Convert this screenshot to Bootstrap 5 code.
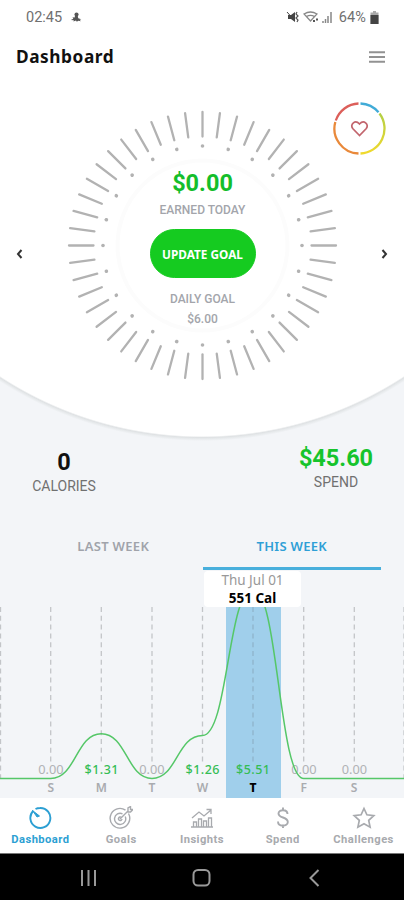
<!DOCTYPE html>
<html lang="en">
<head>
<meta charset="utf-8">
<meta name="viewport" content="width=device-width, initial-scale=1">
<title>Dashboard</title>
<link href="https://cdn.jsdelivr.net/npm/bootstrap@5.3.0/dist/css/bootstrap.min.css" rel="stylesheet">
<style>
body{font-family:"Noto Sans",sans-serif;background:#f3f5f8;color:#111;overflow:hidden}
.phone{width:404px;height:900px;overflow:hidden}
.roboto{font-family:Roboto,sans-serif}
.hero{height:441px;background:radial-gradient(circle 376px at 50% 67px,#fff 369px,#dfe2e4 370.5px,#e8ebed 372px,#f3f5f8 374px)}
.status{height:35px;padding:0 25px 0 26px;font-size:14.5px;color:#707070}
.pct{letter-spacing:.1px}
.topbar{height:43px;padding:0 19px 0 16px}
.topbar h1{font-size:17.3px;font-weight:700;letter-spacing:.55px;line-height:24px}
.stage{height:335px;padding:31px 0 0 1px}
.side{width:66px;height:289px;padding:0 16px 0 15px}
.dial>*{grid-area:1/1}
.dial{width:272px;height:272px}
.readout{padding-top:57px}
.earned{font-size:23.5px;font-weight:700;line-height:34px;color:#14be2b}
.cap{font-size:12px;line-height:20px;font-weight:500;color:#a3a5ab}
.btn-goal{--bs-btn-bg:#15cb20;--bs-btn-color:#fff;--bs-btn-border-color:#15cb20;width:106px;height:49px;border-radius:25px;font:700 11.8px "Noto Sans",sans-serif;padding:0;margin:9px 0 11px}
.heart{right:18px;top:102px}
.stat{width:128px;padding-top:7px}
.stat-right{padding-top:3px;margin-right:4px}
.stat-v{font-size:23.5px;font-weight:700;line-height:28px}
.stat-l{font-size:14px;line-height:20px;color:#707070}
.green{color:#16c42c}
.totals{height:92px}
.tabs{height:37px;padding:0 23px 0 24px;font-size:13px;font-weight:600;color:#a0a3aa;letter-spacing:.3px}
.tabs div{padding-top:4px}
.tabs .on{color:#2e9fd6;border-bottom:3px solid #48afdc}
.chart{height:228px}
.tip{left:204px;top:1px;width:97px;height:36px;background:#fff;border-radius:4px;font-size:13.5px;line-height:18px;color:#999}
.tip b{color:#000}
.tabbar{height:55px;background:#fff;color:#a8aaae;font-size:11.2px;font-weight:700;font-family:Roboto,sans-serif}
.tabbar a{color:inherit;width:20%;padding-top:8px;line-height:16px;letter-spacing:.45px;white-space:nowrap}
.tabbar a div{padding-top:2px}
.tabbar a.on{color:#2c9fd3}
.keys{height:47px;background:#000;border-top:1px solid #777}
</style>
</head>
<body>
<div class="phone d-flex flex-column">
<section class="hero flex-shrink-0 position-relative">
  <div class="status roboto d-flex align-items-center justify-content-between">
    <div class="d-flex align-items-center"><span>02:45</span>
      <svg class="ms-2" width="12" height="13" viewBox="0 0 14 14" fill="#555"><circle cx="7.6" cy="3.6" r="2.4"/><path d="M6 5h3l.6 3 3.6 1-2 .5 1.5 1.8-3-.6L8 12l-1-1.5-3 1.2.5-1.6L1 10l2.8-1.6L3 6.500l2 .8z"/></svg></div>
    <div class="d-flex align-items-center">
      <svg width="49" height="15" viewBox="0 0 49 15" fill="none" stroke="#555"><path d="M2 5h3l4-3v10L5 9H2z" fill="#444" stroke="none"/><path d="M1 2l8 9" stroke="#444"/><path d="M11 2l-1 2 2 2-2 2 2 2-1 2" stroke-width="1.2"/><path d="M18 4q6.500-4 13 0l-6.500 7zM20.500 6.500q4-2.400 8 0" stroke="#888" stroke-width="1.300"/><path d="M27 11h2m1-1.500h2" stroke="#555" stroke-width="1.800"/><path d="M37 13v-2m2.500 2V9m2.500 4V6m3 7V2" stroke="#888" stroke-width="1.500"/></svg>
      <span class="pct ms-1">64%</span>
      <svg class="ms-1" width="9" height="13" viewBox="0 0 9 13"><path d="M3 0h3v1.500h2.500V13H.5V1.500H3z" fill="#aaa"/><path d="M.5 4h8v9h-8z" fill="#444"/></svg>
    </div>
  </div>
  <header class="topbar d-flex align-items-center justify-content-between">
    <h1 class="m-0">Dashboard</h1>
    <svg width="16" height="12" viewBox="0 0 16 12" stroke="#929292" stroke-width="2"><path d="M0 1.200h16M0 6h16M0 10.800h16"/></svg>
  </header>
  <div class="stage d-flex">
    <div class="side d-flex align-items-center"><svg width="7" height="10" viewBox="0 0 7 10" fill="none" stroke="#333" stroke-width="2"><path d="M5.500 1L2 5l3.500 4"/></svg></div>
    <div class="dial d-grid">
      <svg id="dial" width="272" height="272" viewBox="-135.500 -136.500 272 272" stroke="#b2b2b2" stroke-width="2.300" stroke-linecap="round"><circle r="85" fill="#fff" stroke="#fcfcfc" stroke-width="4"/></svg>
      <div class="readout roboto d-flex flex-column align-items-center">
        <div class="earned">$0.00</div>
        <div class="cap">EARNED TODAY</div>
        <button class="btn btn-goal">UPDATE GOAL</button>
        <div class="cap">DAILY GOAL</div>
        <div class="cap">$6.00</div>
      </div>
    </div>
    <div class="side d-flex align-items-center justify-content-end"><svg width="7" height="10" viewBox="0 0 7 10" fill="none" stroke="#333" stroke-width="2"><path d="M1.500 1L5 5 1.500 9"/></svg></div>
  </div>
  <svg class="heart position-absolute" width="53" height="53" viewBox="-26.500 -26.500 53 53" fill="none" stroke-width="2.300">
    <defs><linearGradient id="lime" x1="0" y1="0" x2="0" y2="1"><stop stop-color="#b3cf45"/><stop offset="1" stop-color="#f0d92d"/></linearGradient></defs>
    <path d="M1-25A25 25 0 0 1 19-16.200" stroke="#41abd7"/><path d="M20-15A25 25 0 0 1 1 25" stroke="url(#lime)"/><path d="M-1 25A25 25 0 0 1-24.200-6.500" stroke="#e9893a"/><path d="M-23.700-8A25 25 0 0 1-1-25" stroke="#dc5f5a"/>
    <path d="M0 7L-6.800 0C-9.500-4-4.500-9.500 0-4.500 4.500-9.500 9.500-4 6.800 0z" stroke="#c2656d" stroke-width="1.700"/>
  </svg>
</section>
<section class="totals roboto d-flex justify-content-between flex-shrink-0 text-center">
  <div class="stat"><div class="stat-v">0</div><div class="stat-l">CALORIES</div></div>
  <div class="stat stat-right"><div class="stat-v green">$45.60</div><div class="stat-l">SPEND</div></div>
</section>
<nav class="tabs d-flex flex-shrink-0 text-center">
  <div class="w-50">LAST WEEK</div><div class="w-50 on">THIS WEEK</div>
</nav>
<section class="chart position-relative flex-shrink-0">
  <svg class="d-block" width="404" height="228" viewBox="0 570 404 228" font-family="Noto Sans" text-anchor="middle">
    <path d="M226 606h55v192h-55z" fill="#a0cfeb"/>
    <path d="M.5 607V778M50.700 607V765M101.300 607V765M152 607V765M202.500 607V765M303.700 607V765M354.300 607V765M404 607V778" stroke="#c3c5c8" stroke-width="1.300" stroke-dasharray="5 3.800"/>
    <path d="M253 607V765" stroke="#8fb4cb" stroke-width="1.300" stroke-dasharray="5 3.800"/>
    <g font-size="12.800" fill="#b0b2b5"><text x="51" y="774">0.00</text><text x="152" y="774">0.00</text><text x="304" y="774">0.00</text><text x="354.500" y="774">0.00</text></g>
    <g font-size="12.500" font-weight="500" fill="#35bd55"><text x="101.500" y="774" textLength="34">$1.31</text><text x="202.500" y="774" textLength="34">$1.26</text><text x="253" y="774" textLength="34">$5.51</text></g>
    <path d="M0 778.500H50.700C76 778.500 76 733.700 101.300 733.700S127 778.500 152 778.500 177 735.500 202.500 735.500C228 735.500 228 589 253 589S279 778.500 303.700 778.500H404" fill="none" stroke="#55c768" stroke-width="1.500"/>
    <g font-size="12" font-weight="600" fill="#a9abaf"><text x="50.700" y="791.500">S</text><text x="101.300" y="791.500">M</text><text x="152" y="791.500">T</text><text x="202.500" y="791.500">W</text><text x="253" y="791.500" fill="#000" font-weight="800">T</text><text x="303.700" y="791.500">F</text><text x="354" y="791.500">S</text></g>
  </svg>
  <div class="tip position-absolute text-center">Thu Jul 01<br><b>551 Cal</b></div>
</section>
<nav class="tabbar d-flex flex-shrink-0 text-center">
  <a class="on text-decoration-none"><svg width="24" height="24" viewBox="0 0 24 24" fill="none" stroke="currentColor" stroke-width="1.900"><path d="M5.400 4.800A10 10 0 1 0 12 2Q9.500 2 7.500 3"/><path d="M4.500 4.500l7 5.500-2.500 1z" fill="currentColor" stroke-width="1"/></svg><div>Dashboard</div></a>
  <a class="text-decoration-none"><svg width="24" height="24" viewBox="0 0 24 24" fill="none" stroke="currentColor" stroke-width="1.400"><path d="M16.500 4.200A9.800 9.800 0 1 0 19.500 7.500M13.500 7.800A5.600 5.600 0 1 0 16.200 10.500M12.500 11.500A1.800 1.800 0 1 0 13 13M11 13l8-8V2l2.500-1.500v3H24L21.500 6H18.500"/></svg><div>Goals</div></a>
  <a class="text-decoration-none"><svg width="24" height="24" viewBox="0 0 24 24" fill="none" stroke="currentColor" stroke-width="1.300"><path d="M1 21h22M3.500 21v-5h3v5M8.500 21v-8h3v8M13.500 21v-6h3v6M18.500 21v-9h3v9M2 12l7-6 5 4 7-6M16.500 3.500H21V8"/></svg><div>Insights</div></a>
  <a class="text-decoration-none"><svg width="24" height="24" viewBox="0 0 24 24" fill="none" stroke="currentColor" stroke-width="1.900"><path d="M16.500 8C16.500 3 7.500 3 7.500 7.500 7.500 12.500 16.800 10.500 16.800 16 16.800 21 7 21 7 15.500M12 1.500V5M12 18.500V22"/></svg><div>Spend</div></a>
  <a class="text-decoration-none"><svg width="24" height="24" viewBox="0 0 24 24" fill="none" stroke="currentColor" stroke-width="1.700"><path d="M12 2.500l2.900 6.300 6.900.8-5.100 4.700 1.400 6.900L12 17.700l-6.100 3.500 1.400-6.900L2.200 9.600l6.900-.8z"/></svg><div>Challenges</div></a>
</nav>
<footer class="keys flex-shrink-0">
  <svg class="d-block" width="404" height="46" viewBox="0 854 404 46" fill="none" stroke="#999" stroke-width="2"><path d="M82 870v16M88.500 870v16M95 870v16"/><rect x="193.500" y="870" width="16" height="15.500" rx="4.500"/><path d="M318.500 870l-8 8 8 8"/></svg>
</footer>
</div>
<script>
const dial = document.getElementById('dial');
const NS = 'http://www.w3.org/2000/svg';
for (let i = 0; i < 48; i++) {
  const tick = document.createElementNS(NS, 'path');
  tick.setAttribute('d', 'M0-109V-133.500');
  tick.setAttribute('transform', `rotate(${i * 7.5})`);
  dial.appendChild(tick);
  if (i % 2 === 0) {
    const dot = document.createElementNS(NS, 'circle');
    dot.setAttribute('cy', '-99.500');
    dot.setAttribute('r', '1.800');
    dot.setAttribute('fill', '#b2b2b2');
    dot.setAttribute('stroke', 'none');
    dot.setAttribute('transform', `rotate(${i * 7.5})`);
    dial.appendChild(dot);
  }
}
</script>
<script src="https://cdn.jsdelivr.net/npm/bootstrap@5.3.0/dist/js/bootstrap.bundle.min.js"></script>
</body>
</html>
